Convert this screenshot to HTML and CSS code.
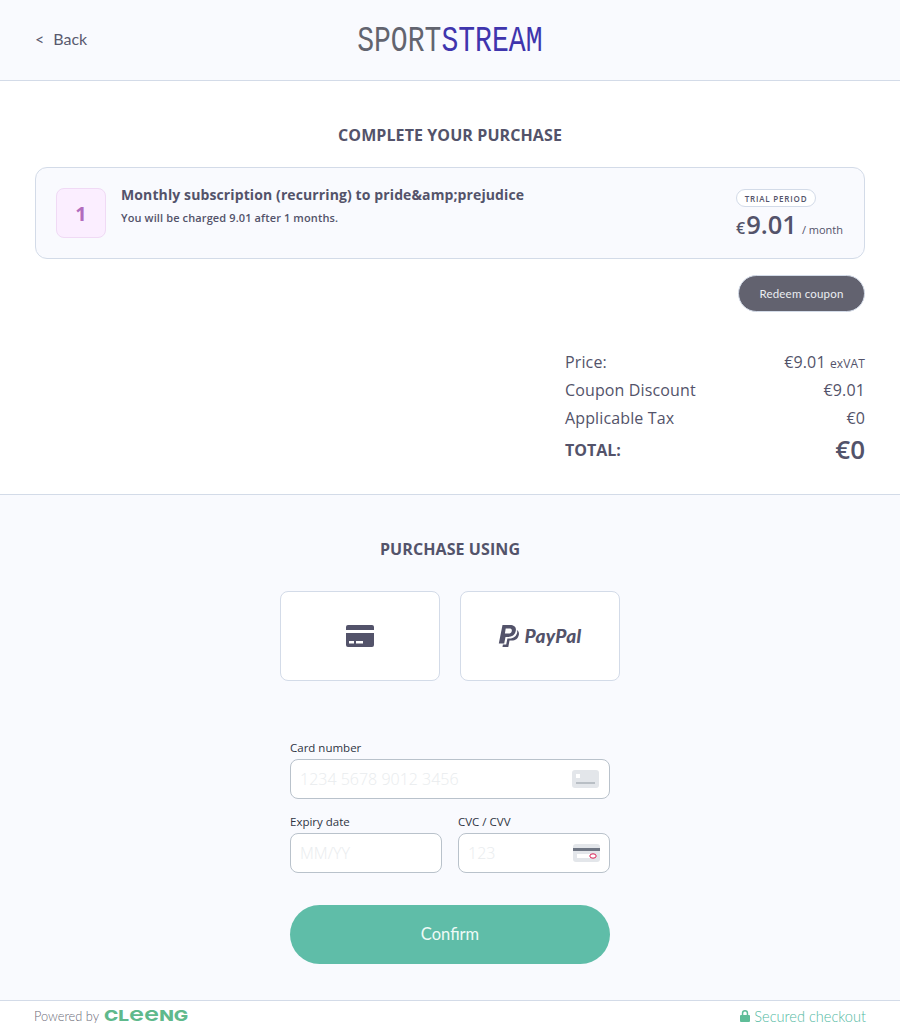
FILE: index.html
```html
<!DOCTYPE html>
<html lang="en">
<head>
<meta charset="utf-8">
<title>Complete your purchase</title>
<link rel="stylesheet" href="styles.css">
</head>
<body>
<header class="topbar">
  <a class="back"><span class="back-arrow">&lt;</span>Back</a>
  <div class="logo"><span class="logo-inner">SPORT<span class="logo-accent">STREAM</span></span></div>
</header>
<main>
  <section class="purchase">
    <h1 class="section-title">COMPLETE YOUR PURCHASE</h1>
    <div class="offer">
      <div class="offer-badge">1</div>
      <div class="offer-text">
        <div class="offer-name">Monthly subscription (recurring) to pride&amp;amp;prejudice</div>
        <div class="offer-note">You will be charged 9.01 after 1 months.</div>
      </div>
      <div class="offer-price">
        <span class="trial">TRIAL PERIOD</span>
        <div class="price-line"><span class="currency">€</span><span class="amount">9.01</span><span class="period">/ month</span></div>
      </div>
    </div>
    <div class="coupon-row"><button class="coupon">Redeem coupon</button></div>
    <div class="summary">
      <div class="row"><span>Price:</span><span>€9.01 <small>exVAT</small></span></div>
      <div class="row"><span>Coupon Discount</span><span>€9.01</span></div>
      <div class="row"><span>Applicable Tax</span><span>€0</span></div>
      <div class="row total"><span class="total-label">TOTAL:</span><span class="total-value">€0</span></div>
    </div>
  </section>
  <section class="payment">
    <h2 class="section-title">PURCHASE USING</h2>
    <div class="methods">
      <div class="method">
        <svg width="28" height="22" viewBox="0 0 28 22"><path fill="#53536a" d="M2 0h24a2 2 0 0 1 2 2v3H0V2a2 2 0 0 1 2-2zM0 8h28v12a2 2 0 0 1-2 2H2a2 2 0 0 1-2-2zm3 8v2.500h5V16zm7 0v2.500h7V16z" fill-rule="evenodd"/></svg>
      </div>
      <div class="method">
        <svg class="pp-mark" width="22" height="23" viewBox="0 0 22 23"><path fill="#53536a" d="M5.500 0h7.500c4 0 6.500 2 5.800 5.800-.8 4.200-3.800 6.200-7.800 6.200H8.500L7.200 18.500H1.800z"/><path fill="#53536a" d="M19.800 5c1.800 1 2.500 2.800 2 5-.8 3.800-3.500 5.500-7 5.500h-2.300l-1.200 6.500H5.500l.4-2.400h3.300l1.200-6.100h2c4.400 0 7.100-2.300 7.900-6.500z"/><path fill="#fff" d="M8.700 3.500h3.600c1.800 0 2.800.8 2.500 2.400-.3 1.800-1.600 2.700-3.400 2.700H7.900z"/></svg>
        <span class="pp-word">PayPal</span>
      </div>
    </div>
    <form class="card-form">
      <div class="field">
        <span class="field-label">Card number</span>
        <div class="input"><span class="placeholder">1234 5678 9012 3456</span>
          <svg width="27" height="18" viewBox="0 0 27 18"><rect width="27" height="18" rx="3" fill="#e3e6ea"/><rect x="4" y="4" width="4" height="4" fill="#fff"/><rect x="4" y="12" width="19" height="2" fill="#b9bfc5"/></svg>
        </div>
      </div>
      <div class="field-pair">
        <div class="field">
          <span class="field-label">Expiry date</span>
          <div class="input"><span class="placeholder">MM/YY</span></div>
        </div>
        <div class="field">
          <span class="field-label">CVC / CVV</span>
          <div class="input"><span class="placeholder">123</span>
            <svg class="cvc-icon" width="27" height="18" viewBox="0 0 27 18"><rect width="27" height="18" rx="3" fill="#e3e6ea"/><rect y="4" width="27" height="3" fill="#6f7683"/><rect x="4" y="10" width="19" height="4" fill="#fff"/><ellipse cx="20" cy="12" rx="3.200" ry="2.200" fill="#fff" stroke="#d81b50" stroke-width="1"/></svg>
          </div>
        </div>
      </div>
      <button class="confirm" type="button">Confirm</button>
    </form>
  </section>
</main>
<footer class="footer">
  <div class="powered">Powered by <span class="cleeng"><span class="cleeng-inner">CL<span class="cleeng-e">ee</span>NG</span></span></div>
  <div class="secured">
    <svg width="10" height="12" viewBox="0 0 10 12"><path fill="#5fbd98" d="M1 5h.800V3.300a3.200 3.200 0 0 1 6.400 0V5H9a1 1 0 0 1 1 1v5a1 1 0 0 1-1 1H1a1 1 0 0 1-1-1V6a1 1 0 0 1 1-1zm2.300 0h3.400V3.300a1.700 1.700 0 0 0-3.400 0z"/></svg>
    Secured checkout
  </div>
</footer>
</body>
</html>
```
FILE: styles.css
```css
* { box-sizing: border-box; }
html, body { margin: 0; padding: 0; }
body {
  font-family: "Open Sans", sans-serif;
  color: #53536a;
  background: #fff;
  height: 1033px;
  overflow: hidden;
}
.topbar {
  height: 81px;
  background: #f9fafe;
  border-bottom: 1px solid #d3dbe8;
  display: flex;
  align-items: center;
  justify-content: center;
  position: relative;
}
.back {
  position: absolute;
  left: 35px;
  top: 29px;
  font-family: "Lato", sans-serif;
  font-size: 16px;
  line-height: 20px;
  color: #5a5a6e;
}
.back-arrow { font-size: 16px; margin-right: 9px; }
.logo {
  font-family: "Liberation Mono", monospace;
  font-size: 36px;
  line-height: 40px;
  color: #62646f;
  width: 185px;
  display: flex;
  justify-content: center;
  margin-top: 4px;
}
.logo-inner { display: inline-block; transform: scaleX(.78); white-space: nowrap; }
.logo-accent { color: #3f35ad; }
.purchase { height: 414px; border-bottom: 1px solid #d3dbe8; padding: 43px 35px 0; }
.section-title {
  margin: 0;
  font-size: 16px;
  line-height: 22px;
  font-weight: 700;
  text-align: center;
  color: #53536a;
  letter-spacing: .09px;
}
.offer {
  margin-top: 21px;
  height: 92px;
  background: #f9fafe;
  border: 1px solid #d3dbe8;
  border-radius: 12px;
  display: flex;
  align-items: center;
  padding: 0 20px;
}
.offer-badge {
  width: 50px;
  height: 50px;
  background: #fbeeff;
  border: 1px solid #f0daf5;
  border-radius: 8px;
  color: #b26cbd;
  font-size: 20px;
  font-weight: 700;
  display: flex;
  align-items: center;
  justify-content: center;
  flex: none;
}
.offer-text { margin-left: 15px; flex: 1; margin-top: -15px; }
.offer-name { font-size: 14px; line-height: 20px; font-weight: 700; letter-spacing: .11px; }
.offer-note { font-size: 11px; line-height: 16px; font-weight: 600; margin-top: 5px; letter-spacing: .12px; }
.offer-price { display: flex; flex-direction: column; align-items: flex-start; width: 108px; margin-top: 3px; }
.trial {
  height: 18px;
  width: 80px;
  border: 1px solid #d3dbe8;
  border-radius: 9px;
  background: #fff;
  font-size: 8px;
  font-weight: 600;
  line-height: 17px;
  text-align: center;
  letter-spacing: .82px;
}
.price-line { display: flex; align-items: baseline; height: 32px; margin-top: 1px; white-space: nowrap; }
.currency { font-size: 16px; font-weight: 600; }
.amount { font-size: 25.500px; font-weight: 600; margin-left: 1px; line-height: 32px; }
.period { font-size: 11px; margin-left: 5px; }
.coupon-row { display: flex; justify-content: flex-end; margin-top: 16px; }
.coupon {
  width: 127px;
  height: 37px;
  border: 1px solid #d3dbe8;
  border-radius: 19px;
  background: #62626f;
  color: #eceef2;
  font-family: "Lato", sans-serif;
  font-size: 11.500px;
  letter-spacing: .2px;
}
.summary { margin: 36px 0 0 530px; }
.row {
  display: flex;
  justify-content: space-between;
  align-items: baseline;
  height: 28px;
  font-size: 16px;
  line-height: 28px;
  letter-spacing: .13px;
}
.row small { font-size: 12px; }
.total { font-weight: 700; margin-top: 3px; line-height: 30px; letter-spacing: 0; align-items: center; }
.total-label { padding-top: 2px; }
.total-value { font-size: 26px; font-weight: 600; }
.payment { height: 506px; background: #f9fafe; border-bottom: 1px solid #d3dbe8; padding-top: 43px; }
.methods { display: flex; justify-content: center; gap: 20px; margin-top: 31px; }
.method {
  width: 160px;
  height: 90px;
  background: #fff;
  border: 1px solid #d3dbe8;
  border-radius: 8px;
  display: flex;
  align-items: center;
  justify-content: center;
  gap: 6px;
}
.pp-mark { margin-left: -2px; }
.pp-word { font-family: "Lato", sans-serif; font-size: 19px; font-weight: 900; font-style: italic; color: #53536a; letter-spacing: .3px; margin-top: -2px; }
.card-form { width: 320px; margin: 60px auto 0; }
.field { display: flex; flex-direction: column; flex: 1; }
.field-label { font-size: 11.500px; line-height: 14px; color: #2f3543; margin-bottom: 4px; }
.input {
  height: 40px;
  background: #fff;
  border: 1px solid #b9c2cb;
  border-radius: 8px;
  padding: 0 10px 0 9px;
  display: flex;
  align-items: center;
  justify-content: space-between;
}
.cvc-icon { margin-right: -1px; }
.placeholder { font-size: 16px; font-weight: 300; color: #e9ecee; }
.field-pair { display: flex; gap: 16px; margin-top: 16px; }
.confirm {
  display: block;
  width: 320px;
  height: 59px;
  margin-top: 32px;
  padding-bottom: 3px;
  border: 0;
  border-radius: 30px;
  background: #5fbda8;
  color: #eefaf6;
  font-family: "Lato", sans-serif;
  font-size: 16.500px;
}
.footer {
  height: 32px;
  display: flex;
  align-items: center;
  justify-content: space-between;
  padding: 0 34px 2px;
  font-family: "Lato", sans-serif;
  font-weight: 300;
  font-size: 12.800px;
}
.powered { color: #6b6b78; display: flex; align-items: center; gap: 5px; }
.cleeng {
  font-family: "Inter", sans-serif;
  font-weight: 800;
  font-size: 15px;
  line-height: 18px;
  color: #5fb98c;
  width: 85px;
}
.cleeng-inner { display: inline-block; transform: scaleX(1.275); transform-origin: left; white-space: nowrap; }
.cleeng-e { font-size: 20px; font-weight: 600; line-height: 14px; }
.secured { color: #52b9a2; font-size: 14.600px; display: flex; align-items: center; gap: 4px; }
```
